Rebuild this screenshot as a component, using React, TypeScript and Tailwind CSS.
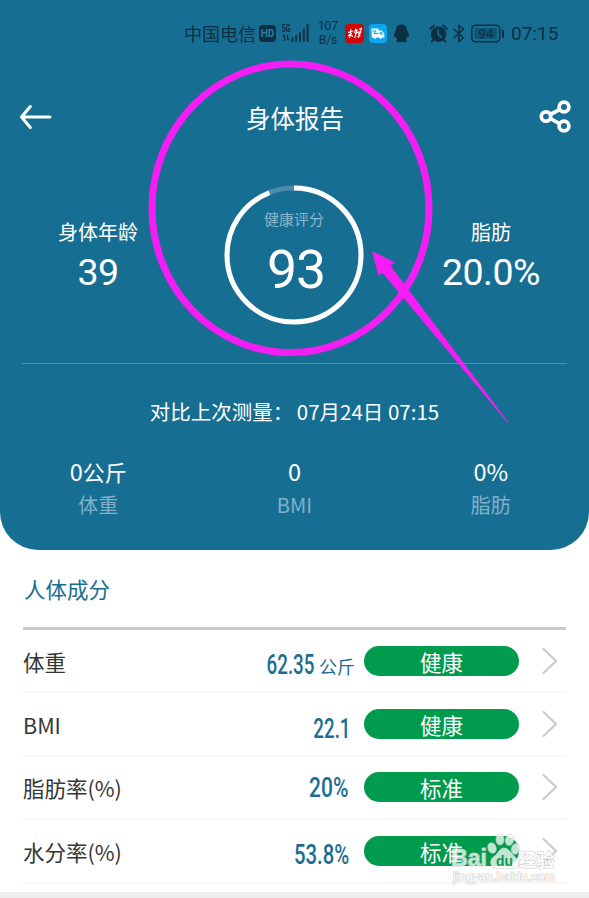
import type { ReactNode } from "react"

type Metric = {
  label: string
  value: string
  unit?: string
  status: string
  valueClass: string
  scaleClass: string
}

const metrics: Metric[] = [
  { label: "体重", value: "62.35", unit: "公斤", status: "健康", valueClass: "pr-[9px] pt-[8px]", scaleClass: "scale-x-[0.670]" },
  { label: "BMI", value: "22.1", status: "健康", valueClass: "pr-[13px] pt-[9px]", scaleClass: "scale-x-[0.670]" },
  { label: "脂肪率(%)", value: "20%", status: "标准", valueClass: "pr-[16px] pt-[2px]", scaleClass: "scale-x-[0.750]" },
  { label: "水分率(%)", value: "53.8%", status: "标准", valueClass: "pr-[15px] pt-[9px]", scaleClass: "scale-x-[0.725]" },
]

function StatusBar() {
  return (
    <div className="flex h-[66px] items-center pl-[184px] text-[#0a3042]">
      <span className="w-[75px] whitespace-nowrap text-[18px] leading-[20px]">中国电信</span>
      <span className="flex h-[17px] w-[17px] items-center justify-center rounded-[4px] bg-[#0a3042] font-['Roboto'] text-[10px] font-bold text-[#2b7fa3]">
        HD
      </span>
      <svg className="ml-[5px]" width="29" height="20" viewBox="0 0 29 20">
        <text x="0.5" y="8.5" fontSize="10.5" fontWeight="700" fontFamily="Roboto" textLength="9" lengthAdjust="spacingAndGlyphs" fill="currentColor">
          5G
        </text>
        <path d="M3.5 18v-6M1.8 13.6L3.5 12M6.5 12v5M8 15.5L6.5 17" stroke="currentColor" strokeWidth="1.3" fill="none" />
        <path d="M11.5 15.5V18M15.2 13V18M19 10V18M22.8 6.5V18M26.6 1.5V18" stroke="currentColor" strokeWidth="2" strokeLinecap="round" />
      </svg>
      <span className="ml-[4px] w-[28px] text-center font-['Roboto'] text-[12px] leading-[14.5px]">
        107
        <br />
        B/s
      </span>
      <svg className="ml-[3px]" width="19" height="19" viewBox="0 0 19 19">
        <rect width="19" height="19" rx="4" fill="#cf0508" />
        <path
          d="M3 8.5l5-1.5M6 5L4.5 14M3 12l4-3M5 10.5l3 2M9.5 6.5l3-.8M11 4.8L9.5 9M9.8 9.5l4-1.5M12.2 6l-2.5 8M14 5.2l2.5-.8-1 3.6-2-.3M13 10l3.2-1M14.8 8.5l-1.5 5.5M12.5 12.5l3-1"
          stroke="#fff"
          strokeWidth="1.1"
          fill="none"
        />
      </svg>
      <svg className="ml-[5px]" width="18" height="19" viewBox="0 0 18 19">
        <rect width="18" height="19" rx="4" fill="#0ba6f0" />
        <path d="M2.5 4.5h7v2h3.2l2.6 3v4h-2a1.8 1.8 0 0 1-3.4 0H7.6a1.8 1.8 0 0 1-3.4 0H2.8z" fill="#fff" />
        <path d="M3 7h4l-2 2.5h4.5M11 8.5h1.5l1.3 1.6H11z" stroke="#0ba6f0" strokeWidth="1" fill="none" />
      </svg>
      <svg className="ml-[6px]" width="17" height="19" viewBox="0 0 17 19">
        <path
          d="M8.5.5C4.8.5 3 2.8 3 6.3 1.7 8.3.9 10.5 1 12.3c.2 1.1 1 .8 1.7.1.3 1.2.8 2.2 1.500 3-1 .5-1.200 1.200-1 1.800.3 1 3.300 1.200 5.300.6 2 .6 5 .4 5.300-.6.2-.6 0-1.300-1-1.800.7-.8 1.200-1.800 1.500-3 .7.7 1.500 1 1.700-.1.1-1.800-.7-4-2-6C14 2.800 12.200.5 8.500.5z"
          fill="currentColor"
        />
      </svg>
      <svg className="ml-[19px]" width="19" height="19" viewBox="0 0 19 19">
        <circle cx="9.5" cy="10.3" r="7.7" fill="currentColor" />
        <path d="M1.3 4.8L5 1.6M17.7 4.8L14 1.6M4 16l-1.2 1.6M15 16l1.2 1.6" stroke="currentColor" strokeWidth="2" strokeLinecap="round" />
        <path d="M9.3 6v4.7l3 2.5" stroke="#176e93" strokeWidth="1.6" fill="none" strokeLinecap="round" />
      </svg>
      <svg className="ml-[5px]" width="12" height="19" viewBox="0 0 12 19">
        <path d="M1 5.2l9.5 8.6L6 17.8V1.2l4.5 4L1 13.8" stroke="currentColor" strokeWidth="1.5" fill="none" strokeLinejoin="round" strokeLinecap="round" />
      </svg>
      <svg className="ml-[6px]" width="34" height="19" viewBox="0 0 34 19">
        <rect x="0.8" y="1.2" width="28" height="16.6" rx="4" stroke="currentColor" strokeWidth="1.5" fill="none" />
        <rect x="3.5" y="4" width="22.5" height="11" rx="1.5" fill="#0f5472" />
        <text x="14.8" y="14.200" fontSize="13.5" fontFamily="Roboto" textAnchor="middle" fill="currentColor">
          94
        </text>
        <path d="M32 6.5v6.5" stroke="currentColor" strokeWidth="2" strokeLinecap="round" />
      </svg>
      <span className="ml-[6px] pt-[1px] font-['Roboto'] text-[19px] leading-[20px]">07:15</span>
    </div>
  )
}

function TopStat({ label, children }: { label: string; children: ReactNode }) {
  return (
    <div className="w-[196px] pt-[34px] text-center text-white">
      <div className="text-[20px] leading-[26px]">{label}</div>
      <div className="mt-[5px] font-['Roboto'] text-[37.5px] leading-[44px] tracking-[-0.5px]">{children}</div>
    </div>
  )
}

function ScoreRing() {
  return (
    <div className="relative h-[140px] w-[140px]">
      <svg className="absolute inset-0" width="140" height="140" viewBox="0 0 140 140">
        <circle cx="70" cy="70" r="67" stroke="#4a8cae" strokeWidth="5" fill="none" />
        <circle
          cx="70"
          cy="70"
          r="67"
          stroke="#fff"
          strokeWidth="5"
          fill="none"
          pathLength="100"
          strokeDasharray="94 100"
          transform="rotate(-90 70 70)"
        />
      </svg>
      <div className="pt-[24px] text-center text-[15px] leading-[20px] text-[#8bb7cd]">健康评分</div>
      <div className="pl-[4px] pt-[11px] text-center font-['Roboto'] text-[53.5px] leading-[60px] tracking-[-1px] text-white">93</div>
    </div>
  )
}

function Change({ label, children }: { label: string; children: ReactNode }) {
  return (
    <div className="flex-1 text-center">
      <div className="h-[32px] text-[23.5px] leading-[31px] text-white">{children}</div>
      <div className="mt-[2px] text-[20px] leading-[30px] text-[#80b0cb]">{label}</div>
    </div>
  )
}

function MetricRow({ metric }: { metric: Metric }) {
  return (
    <div className="flex h-[63.4px] items-center border-b-2 border-[#f7f7f7]">
      <span className="w-[120px] pt-[2px] text-[21.5px] leading-[30px] text-[#363636]">{metric.label}</span>
      <div className={`flex flex-1 items-baseline justify-end text-[#1d6d92] ${metric.valueClass}`}>
        <span className={`origin-right font-['Roboto'] text-[28px] font-medium leading-[30px] ${metric.scaleClass}`}>
          {metric.value}
        </span>
        {metric.unit && <span className="ml-[5px] text-[18px] leading-[24px]">{metric.unit}</span>}
      </div>
      <span className="h-[30px] w-[155px] rounded-full bg-[#009b4c] text-center text-[21.5px] leading-[32px] text-white">
        {metric.status}
      </span>
      <svg className="ml-[22px] mr-[8px]" width="17" height="28" viewBox="0 0 17 28">
        <path d="M2.5 2L15 14L2.5 26" stroke="#cccccc" strokeWidth="2.3" fill="none" strokeLinecap="round" />
      </svg>
    </div>
  )
}

// hand drawn circle and arrow on top of the score
function Annotation() {
  return (
    <svg className="pointer-events-none absolute left-0 top-0" width="589" height="450" viewBox="0 0 589 450">
      <ellipse cx="290.5" cy="208.3" rx="138.5" ry="144.3" stroke="#f41df4" strokeWidth="7" fill="none" />
      <path d="M372 251L394.7 262.3L390.7 266L508.5 422.5L507.5 422.5L382.7 273L378.3 275.5Z" fill="#f41df4" />
    </svg>
  )
}

function Watermark() {
  return (
    <svg className="pointer-events-none absolute bottom-[12px] right-[28px]" width="112" height="55" viewBox="0 0 112 55">
      <g fill="#fff" stroke="#c4c4c4" strokeWidth="1.2" paintOrder="stroke" opacity="0.75" fontFamily="Liberation Sans, Noto Sans CJK SC, sans-serif">
        <text x="2" y="35" fontSize="23" fontWeight="700" textLength="36" lengthAdjust="spacingAndGlyphs">
          Bai
        </text>
        <ellipse cx="43" cy="17" rx="4" ry="5.2" transform="rotate(-20 43 17)" />
        <ellipse cx="51" cy="8.5" rx="3.9" ry="5.4" />
        <ellipse cx="60.5" cy="9" rx="3.9" ry="5.4" transform="rotate(12 60.5 9)" />
        <ellipse cx="66.5" cy="18" rx="4" ry="5.2" transform="rotate(15 66.5 18)" />
        <path d="M55 17c-4 0-5 4-8 7-4 3-6 5-5 9 1 4 5 4.5 8 4h11c4 .5 7 0 8-4 .5-4-2-6-5-9s-5-7-9-7z" />
        <text x="69.5" y="36" fontSize="18" fontWeight="700" textLength="36" lengthAdjust="spacingAndGlyphs">
          经验
        </text>
        <text x="4" y="49.5" fontSize="12" textLength="102" lengthAdjust="spacingAndGlyphs">
          jingyan.baidu.com
        </text>
      </g>
      <text x="47" y="35" fontSize="15" fontWeight="700" fontFamily="Liberation Sans" fill="#149756" textLength="17" lengthAdjust="spacingAndGlyphs">
        du
      </text>
    </svg>
  )
}

export default function App() {
  return (
    <div className="relative flex h-[898px] w-[589px] flex-col overflow-hidden bg-white font-['Noto_Sans_CJK_SC',sans-serif]">
      <section className="h-[550px] rounded-b-[38px] bg-[#176e93]">
        <StatusBar />

        <header className="flex h-[101px] items-center justify-between pl-[19px] pr-[18px] text-white">
          <svg width="33" height="26" viewBox="0 0 33 26">
            <path d="M31 13H2.5M11.3 2.5L2.5 13L11.3 23.5" stroke="currentColor" strokeWidth="3" fill="none" strokeLinecap="round" strokeLinejoin="round" />
          </svg>
          <h1 className="pt-[2px] text-[24.5px] leading-[32px]">身体报告</h1>
          <svg width="33" height="33" viewBox="0 0 33 33">
            <g stroke="currentColor" strokeWidth="3.7" fill="none">
              <circle cx="8" cy="16.5" r="4.7" />
              <circle cx="26" cy="7" r="4.9" />
              <circle cx="26" cy="26" r="4.9" />
              <path d="M12.2 14.5L21.5 9.6M12.2 18.5L21.5 23.6" />
            </g>
          </svg>
        </header>

        <div className="mt-[18px] flex h-[178px]">
          <TopStat label="身体年龄">39</TopStat>
          <div className="flex flex-1 justify-center pr-[1px]">
            <ScoreRing />
          </div>
          <TopStat label="脂肪">20.0%</TopStat>
        </div>

        <div className="mx-[22px] h-px bg-[#4a8eb0]" />

        <p className="mt-[32px] flex justify-center text-[20.5px] leading-[30px] text-white">
          <span className="w-[147px] whitespace-nowrap">对比上次测量：</span>
          <span className="whitespace-nowrap">07月24日 07:15</span>
        </p>

        <div className="mt-[30px] flex">
          <Change label="体重">
            0<span className="text-[22px]">公斤</span>
          </Change>
          <Change label="BMI">0</Change>
          <Change label="脂肪">0%</Change>
        </div>
      </section>

      <section className="px-[23px]">
        <h2 className="h-[77px] pl-[1px] pt-[23px] text-[21.5px] leading-[32px] text-[#1a6e93]">人体成分</h2>
        <div className="h-[3px] bg-[#cacaca]" />
        {metrics.map((metric) => (
          <MetricRow key={metric.label} metric={metric} />
        ))}
      </section>

      <div className="mt-auto h-[6px] bg-[#eeeeee]" />

      <Annotation />
      <Watermark />
    </div>
  )
}
